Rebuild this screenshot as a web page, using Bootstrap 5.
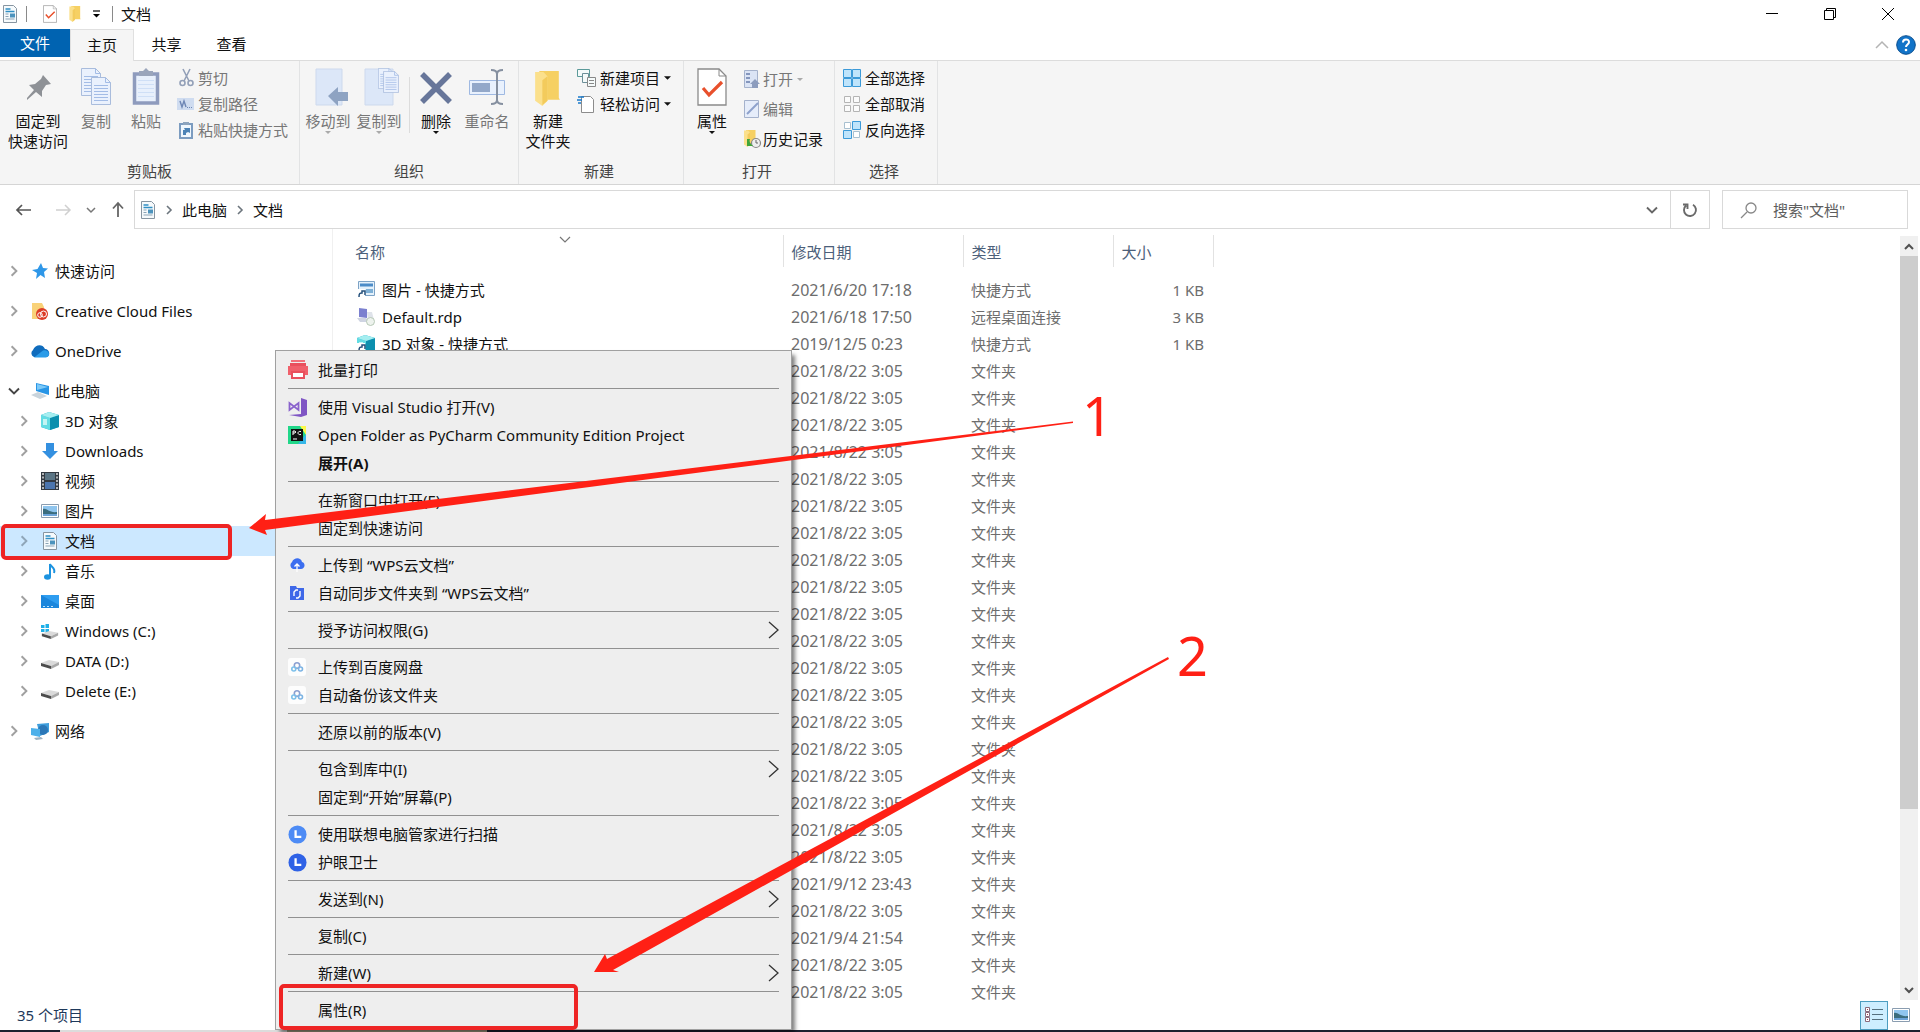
<!DOCTYPE html>
<html lang="zh-CN">
<head>
<meta charset="utf-8">
<meta name="viewport" content="width=device-width, initial-scale=1">
<title>文档</title>
<link rel="stylesheet" href="https://cdn.jsdelivr.net/npm/bootstrap@5.3.0/dist/css/bootstrap.min.css">
<style>
body{font-family:"Noto Sans","Noto Sans CJK SC",sans-serif;font-size:15px;line-height:20px;color:#111;background:#fff}
svg{flex:none;display:block;overflow:visible}
button,a{color:inherit;text-decoration:none}
.plain{border:0;background:none;padding:0;color:inherit}
.titlebar{height:29px;padding:0 3px 2px 2px}
.titlebar .vline{width:1px;height:16px;background:#8a8a8a}
.quick{gap:12px;margin:0 12px 0 16px}
.wctl{width:58px;height:24px}
.tabs{height:31px}
.tabs .filetab{width:70px;height:28px;background:#0063b1;color:#fff}
.tabs .rtab{width:65px;height:32px;padding-bottom:2px}
.tabs .rtab.on{background:#f5f5f5;border:1px solid #e0e0e0;border-bottom:0;position:relative;z-index:1;width:64px}
.ribbon{height:125px;background:#f5f5f5;border-top:1px solid #dcdcdc;border-bottom:1px solid #d5d5d5}
.rgroup{border-right:1px solid #e2e3e4;padding-bottom:3px}
.g1{width:300px}.g2{width:219px}.g3{width:165px}.g4{width:151px}.g5{width:103px}
.g1 .tools{padding-left:2px}.g2 .tools{padding-left:4px}.g3 .tools{padding-left:4px}.g5 .tools{padding-left:8px}
.rlabel{color:#444;text-align:center}
.g3 .rlabel,.g4 .rlabel,.g5 .rlabel{padding-right:4px}
.big{padding-top:7px;color:#111}
.big .lb{margin-top:5px}
.off{color:#777}
.off .tri{color:#aaa}
.smalls{padding-top:4px}
.small-btn{height:26px;gap:4px;white-space:nowrap}
.g4 .small-btn{height:30px}
.g4 .smalls{padding-top:3px}
.w44{width:44px}.w48{width:48px}.w50{width:50px}.w52{width:52px}.w54{width:54px}.w56{width:56px}.w72{width:72px}
.vsplit{width:1px;height:56px;margin:16px 0 0 3px;background:#dcdcdc}
.addr{height:44px;padding:5px 12px 0 0}
.navbtns{width:134px}
.crumbs{height:39px;border:1px solid #d9d9d9;padding-left:5px}
.crumbs .tail{height:37px;border-left:1px solid #d9d9d9;width:39px}
.search{width:186px;height:39px;border:1px solid #d9d9d9;margin-left:12px;padding-left:18px}
.search input{border:0;outline:0;padding:0;width:120px;background:none;color:#555}
.search input::placeholder{color:#5e5e5e;opacity:1}
.work{overflow:hidden}
.tree{width:333px;border-right:1px solid #f0f0f0;padding-top:27px}
.tree ul{list-style:none;margin:0 0 10px;padding:0}
.tree a{height:30px}
.tree .l1{padding-left:8px}.tree .l2{padding-left:18px}
.tree a > svg{width:12px;height:12px;color:#a0a0a0}
.tree .sel{background:#cce8ff}
.tree .sel > svg{color:#8fa5b8}
.tree .open > svg{color:#444;height:10px}
.tree .icn{width:24px;margin:0 3px 0 8px}
.files{table-layout:fixed;width:880px;margin-top:6px}
.files .c1{width:450px}.files .c2{width:180px}.files .c3{width:150px}.files .c4{width:100px}
.files th{height:32px;font-weight:400;color:#4c607a;border-right:1px solid #e2e2e2;padding:2px 8px 0;position:relative}
.files th:first-child{padding-left:22px}
.files tbody::before{content:"";display:block;height:9px}
.files td{height:27px;line-height:16px;padding:0 9px 0 8px;color:#6d6d6d;white-space:nowrap}
.files td:nth-child(2){font-size:16px}
.files td:first-child{padding-left:24px;color:#111}
.files td:last-child{text-align:right}
.sortmark{position:absolute;left:227px;top:2px}
.scroll{width:18px;margin:7px 2px 0 0;background:#f0f0f0}
.scroll button{height:20px;width:18px}
.scroll .thumb{height:553px;background:#cdcdcd}
.statusbar{height:30px;padding:0 10px 0 17px;color:#1e395b}
.statusbar .view-on{width:28px;height:29px;background:#cdeeff;border:1px solid #4d9dc0}
.taskedge{height:2px;background:#1b2030}
.taskedge i{height:2px}
.taskedge .e1{width:60px}.taskedge .e2{width:227px;background:#dcdcdc}.taskedge .e3{width:200px;background:#a39a80}
.ctx{position:absolute;left:275px;top:350px;width:517px;background:#eee;border:1px solid #a0a0a0;padding:6px 12px 4px;box-shadow:4px 4px 4px -1px rgba(0,0,0,.5)}
.ctx button{height:28px;width:100%;text-align:left;padding-bottom:2px}
.ctx .icn{width:18px;margin-right:12px}
.ctx hr{margin:3px 0 5px;border:0;height:1px;background:#919191;opacity:1}
.notes{position:absolute;left:0;top:0;pointer-events:none;z-index:5}
.notes text{font-family:"Noto Sans",sans-serif;font-size:54px;fill:#ff2015}
</style>
<script src="https://cdn.jsdelivr.net/npm/bootstrap@5.3.0/dist/js/bootstrap.bundle.min.js"></script>
</head>
<body>
<svg width="0" height="0" class="position-absolute" aria-hidden="true">
<defs>
<symbol id="doc" viewBox="0 0 16 18"><path d="M1.500 .5h10l3 3v14h-13z" fill="#f6fafc" stroke="#8795a1"/><path d="M3.500 4h5M3.500 6.500h9" stroke="#2f8fc4" stroke-width="1.500"/><path d="M3.500 9h3M3.500 11.500h3M3.500 14h9" stroke="#8ba3b5"/><path d="M8 8.500h5v4H8z" fill="#4c93bd"/></symbol>
<symbol id="chev" viewBox="0 0 10 10"><path d="M3 1l4 4-4 4" fill="none" stroke="currentColor" stroke-width="1.600"/></symbol>
<symbol id="chevd" viewBox="0 0 12 10"><path d="M1 2.500l5 5 5-5" fill="none" stroke="currentColor" stroke-width="1.900"/></symbol>
<symbol id="tri" viewBox="0 0 6 3"><path d="M0 0h6l-3 3z" fill="currentColor"/></symbol>
<symbol id="fold" viewBox="0 0 24 34"><path d="M4 0h19v26l1 2H7z" fill="#f6d063"/><path d="M0 1h8l4 4v24l-5 5-7-5z" fill="#fbe08c"/><path d="M12 5v24l-5 4V9z" fill="#f3cb5c"/></symbol>
<symbol id="check" viewBox="0 0 30 38"><path d="M1 1h21l7 7v29H1z" fill="#fff" stroke="#8a8a8a" stroke-width="1.300"/><path d="M22 1v7h7" fill="none" stroke="#8a8a8a"/><path d="M6 20l6 7L25 14" fill="none" stroke="#e8502c" stroke-width="3.200"/></symbol>
<symbol id="page" viewBox="0 0 20 28"><path d="M.5.5h14l5 5v22H.5z" fill="#eaf1fd" stroke="#a9bcdc"/><path d="M14.500 .5v5h5M3 8.500h14M3 11.500h14M3 14.500h14M3 17.500h14M3 20.500h14M3 23.500h14" fill="none" stroke="#a3bce6"/></symbol>
<symbol id="pic" viewBox="0 0 18 14"><path d="M.5.5h17v13H.5z" fill="#fff" stroke="#8a9db0"/><path d="M2 2h14v10H2z" fill="#8fc5ee"/><path d="M2 5c4-1 6 4 14 3v2H2z" fill="#3b6d7e"/><path d="M2 10h14v2H2z" fill="#6ba3d8"/></symbol>
<symbol id="cube" viewBox="0 0 18 18"><path d="M0 3l8-3 10 3v12l-9 3-9-3z" fill="#1ab0cc"/><path d="M0 3l9 3v12l-9-3z" fill="#62dce3"/><path d="M9 6l9-3v12l-9 3z" fill="#0c8fae"/><path d="M0 3l8-3 10 3-9 3z" fill="#a5eef0"/><path d="M2 7h4v6H2z" fill="#c3f4f3"/></symbol>
<symbol id="drive" viewBox="0 0 18 10"><path d="M0 4l8-3 10 2-8 4z" fill="#dadada"/><path d="M0 4l10 3v3L0 7z" fill="#4c4c4c"/><path d="M10 7l8-4v3l-8 4z" fill="#a9a9a9"/></symbol>
<symbol id="pan" viewBox="0 0 18 18"><rect width="18" height="18" rx="3" fill="#fdfdfd"/><g fill="none" stroke-width="1.600"><circle cx="9" cy="7.500" r="2.700" stroke="#8a9fd0"/><circle cx="5.800" cy="11" r="2" stroke="#7cc0ea"/><circle cx="12.500" cy="11" r="2" stroke="#7cb4e4"/></g></symbol>
<symbol id="lvo" viewBox="0 0 20 20"><circle cx="10" cy="10" r="9.500" fill="currentColor"/><path d="M8 5.500v7h6" fill="none" stroke="#fff" stroke-width="2.400"/></symbol>
</defs></svg>

<div class="d-flex flex-column vh-100 overflow-hidden position-relative">
<header>
<div class="titlebar d-flex align-items-center">
 <svg width="16" height="18"><use href="#doc"/></svg><span class="vline ms-2"></span>
 <div class="quick d-flex align-items-center">
 <button class="plain" aria-label="属性"><svg width="14" height="18"><use href="#check"/></svg></button>
 <button class="plain" aria-label="新建文件夹"><svg width="12" height="16"><use href="#fold"/></svg></button>
 <button class="plain" aria-label="自定义"><svg width="7" height="8" viewBox="0 0 7 8"><path d="M0 1h7" stroke="#111" stroke-width="1.300"/><path d="M0 4h7L3.500 7.500z"/></svg></button>
 </div>
 <span class="vline me-2"></span><span>文档</span>
 <div class="ms-auto d-flex">
  <button class="plain wctl d-flex justify-content-center align-items-center" aria-label="最小化"><svg width="12" height="12"><path d="M0 5.500h12" stroke="#000"/></svg></button>
  <button class="plain wctl d-flex justify-content-center align-items-center" aria-label="还原"><svg width="12" height="12" fill="none" stroke="#000"><path d="M.5 2.500h9v9h-9zM2.500 2V.5h9v9H10"/></svg></button>
  <button class="plain wctl d-flex justify-content-center align-items-center" aria-label="关闭"><svg width="12" height="12" stroke="#000"><path d="M0 0l12 12M12 0L0 12"/></svg></button>
 </div>
</div>
<nav class="tabs d-flex">
 <button class="plain filetab">文件</button>
 <button class="plain rtab on">主页</button><button class="plain rtab">共享</button><button class="plain rtab">查看</button>
 <div class="ms-auto d-flex align-items-center pe-1 gap-2">
  <svg width="12" height="8" fill="none" stroke="#b4b4b4" stroke-width="1.500"><path d="M0 7l6-6 6 6"/></svg>
  <button class="plain" aria-label="帮助"><svg width="20" height="20"><circle cx="10" cy="10" r="9.300" fill="#1173c8" stroke="#0b4f90"/><path d="M7 7.500c0-4 6-4 6-.5 0 2.500-3 2.500-3 5" fill="none" stroke="#fff" stroke-width="2"/><circle cx="10" cy="15" r="1.300" fill="#fff"/></svg></button>
 </div>
</nav>
<div class="ribbon d-flex">
 <section class="rgroup g1 d-flex flex-column">
  <div class="tools d-flex flex-fill align-items-start">
   <button class="plain big w72 d-flex flex-column align-items-center"><svg width="28" height="38" viewBox="0 0 28 38"><path d="M19 7l8 9-5 1-4 6v6l-6-5-9 8 0-2 7-8-5-5 6-1 6-5z" fill="#8e9196"/></svg><span class="lb">固定到<br>快速访问</span></button>
   <button class="plain big off w44 d-flex flex-column align-items-center"><svg width="30" height="38"><use href="#page" width="20" height="28"/><use href="#page" x="10" y="9" width="20" height="28"/></svg><span class="lb">复制</span></button>
   <button class="plain big off w56 d-flex flex-column align-items-center"><svg width="28" height="38"><path d="M2.500 6h23v29h-23z" fill="#e8f0fc" stroke="#8e9bbd" stroke-width="3.500"/><path d="M7 3h4l3-3 3 3h4v5H7z" fill="#9aa5bb"/><path d="M6 12.500h16M6 16.500h16M6 20.500h16M6 24.500h16M6 28.500h16" stroke="#cfdff6"/></svg><span class="lb">粘贴</span></button>
   <div class="smalls off ps-1">
    <button class="plain small-btn d-flex align-items-center"><svg width="16" height="18" fill="none" stroke="#93a0b8" stroke-width="1.600"><path d="M5 0l6 12M12 0L6 12"/><circle cx="4.500" cy="14" r="2.500"/><circle cx="12.500" cy="14" r="2.500"/></svg>剪切</button>
    <button class="plain small-btn d-flex align-items-center"><svg width="16" height="12"><path d="M-1 0h17v12H-1z" fill="#cfdcf0"/><path d="M2 3l2 6 2-6 2 6" fill="none" stroke="#6e87b5" stroke-width="1.400"/><path d="M9 9.500h6" stroke="#6e87b5" stroke-dasharray="1 1"/></svg>复制路径</button>
    <button class="plain small-btn d-flex align-items-center"><svg width="16" height="18"><path d="M2 3h12v14H2z" fill="#f0f7fd" stroke="#7c9cc0" stroke-width="2"/><path d="M5 1h6v3H5z" fill="#8da4bd"/><path d="M5 14V9h2L6 7h6v5l-2-1-2 1v2z" fill="#4d83b6"/></svg>粘贴快捷方式</button>
   </div>
  </div><div class="rlabel">剪贴板</div>
 </section>
 <section class="rgroup g2 d-flex flex-column">
  <div class="tools d-flex flex-fill align-items-start">
   <button class="plain big off w48 d-flex flex-column align-items-center"><svg width="24" height="38"><path d="M0 1h26v36H0z" fill="#dce7f8" stroke="#cdd9ed"/><path d="M12 28l10-9v5h10v9H22v5z" fill="#8ea3c2"/></svg><span class="lb">移动到</span><svg class="tri" width="6" height="3"><use href="#tri"/></svg></button>
   <button class="plain big off w54 d-flex flex-column align-items-center"><svg width="28" height="38"><path d="M0 1h28v36H0z" fill="#dce7f8" stroke="#cdd9ed"/><use href="#page" x="13" y="0" width="15" height="21"/><use href="#page" x="18" y="3" width="16" height="22"/></svg><span class="lb">复制到</span><svg class="tri" width="6" height="3"><use href="#tri"/></svg></button>
   <div class="vsplit"></div>
   <button class="plain big w52 d-flex flex-column align-items-center"><svg width="30" height="38"><path d="M1 6l28 28M29 6L1 34" stroke="#67769a" stroke-width="5.500"/></svg><span class="lb">删除</span><svg class="tri" width="6" height="3"><use href="#tri"/></svg></button>
   <button class="plain big off w50 d-flex flex-column align-items-center"><svg width="36" height="38"><path d="M.5 12.500h35v14H.5z" fill="#e9f1fd" stroke="#9fb9e2"/><path d="M3 15h18v9H3z" fill="#93a8c9"/><path d="M22 2q6 0 6 4v26q0 4-6 4M34 2q-6 0-6 4v26q0 4 6 4" fill="none" stroke="#8690a0" stroke-width="2"/></svg><span class="lb">重命名</span></button>
  </div><div class="rlabel">组织</div>
 </section>
 <section class="rgroup g3 d-flex flex-column">
  <div class="tools d-flex flex-fill align-items-start">
   <button class="plain big w50 d-flex flex-column align-items-center"><svg width="26" height="38"><use href="#fold" y="3" width="25" height="35"/></svg><span class="lb">新建<br>文件夹</span></button>
   <div class="smalls ps-1">
    <button class="plain small-btn d-flex align-items-center"><svg width="19" height="18" fill="#f5fafa"><path d="M.5.5h12v7H.5z" stroke="#5b9a99"/><path d="M5.500 4.500h6v9h-6z" stroke="#6c8f98"/><path d="M10.500 8.500h8v9h-8zM12 11.500h5M12 14.500h5" stroke="#888"/></svg>新建项目<svg width="7" height="4"><use href="#tri"/></svg></button>
    <button class="plain small-btn d-flex align-items-center"><svg width="19" height="18"><path d="M4.500 1.500h9l3 3v13h-12z" fill="#fff" stroke="#8c8c8c"/><path d="M1 2h6M0 5h5M1 8h3" stroke="#1979ca" stroke-width="1.400"/></svg>轻松访问<svg width="7" height="4"><use href="#tri"/></svg></button>
   </div>
  </div><div class="rlabel">新建</div>
 </section>
 <section class="rgroup g4 d-flex flex-column">
  <div class="tools d-flex flex-fill align-items-start">
   <button class="plain big w56 d-flex flex-column align-items-center"><svg width="30" height="38"><use href="#check"/></svg><span class="lb">属性</span><svg width="6" height="3"><use href="#tri"/></svg></button>
   <div class="smalls ps-1">
    <button class="plain small-btn off d-flex align-items-center"><svg width="15" height="18"><path d="M.5.5h13v17H.5z" fill="#dbe4f5" stroke="#a5b2cc"/><path d="M2 3h4v2H2zM2 7h4v2H2zM2 11h4v2H2z" fill="#8496bd"/><path d="M8 18v-4H6l5-5 5 5h-2v4z" fill="#8c9cbd"/></svg>打开<svg class="tri" width="6" height="3"><use href="#tri"/></svg></button>
    <button class="plain small-btn off d-flex align-items-center"><svg width="15" height="18"><path d="M.5.5h14v17H.5z" fill="#e6edfa" stroke="#a5b2cc"/><path d="M3 14L14 3" stroke="#8ea1cb" stroke-width="2"/></svg>编辑</button>
    <button class="plain small-btn d-flex align-items-center"><svg width="15" height="18"><use href="#fold" width="12" height="17"/><circle cx="12" cy="13" r="4.500" fill="#eee" stroke="#888" stroke-width="1.200"/><path d="M12 10v3h2" fill="none" stroke="#666"/><path d="M3 9v7h6l-2-2c-1-1-2-3-1-5z" fill="#3fa53b"/></svg>历史记录</button>
   </div>
  </div><div class="rlabel">打开</div>
 </section>
 <section class="rgroup g5 d-flex flex-column">
  <div class="tools smalls flex-fill">
    <button class="plain small-btn d-flex align-items-center"><svg width="18" height="18" fill="#bfe4fb" stroke="#3c9ad8"><path d="M.5.5h8v8h-8zM9.500 .5h8v8h-8zM.5 9.500h8v8h-8zM9.500 9.500h8v8h-8z"/></svg>全部选择</button>
    <button class="plain small-btn d-flex align-items-center"><svg width="18" height="16" fill="#fbfbfb" stroke="#b4b4b4"><path d="M1.500 .5h6v6h-6zM10.500 .5h6v6h-6zM1.500 9.500h6v6h-6zM10.500 9.500h6v6h-6z"/></svg>全部取消</button>
    <button class="plain small-btn d-flex align-items-center"><svg width="18" height="18"><path d="M1.500 1.500h6v6h-6zM10.500 10.500h6v6h-6z" fill="#fff" stroke="#a8c0d0"/><path d="M9.500 .5h8v8h-8zM.5 9.500h8v8h-8z" fill="#bfe4fb" stroke="#3c9ad8"/></svg>反向选择</button>
  </div><div class="rlabel">选择</div>
 </section>
</div>
<div class="addr d-flex">
 <div class="navbtns d-flex align-items-center ps-3">
  <button class="plain" aria-label="后退"><svg width="16" height="12" fill="none" stroke="#555" stroke-width="1.700"><path d="M15 6H1M6 1L1 6l5 5"/></svg></button>
  <button class="plain ms-4" aria-label="前进"><svg width="14" height="12" fill="none" stroke="#d0d0d0" stroke-width="1.500"><path d="M0 6h13M9 1l5 5-5 5"/></svg></button>
  <button class="plain ms-3" aria-label="最近"><svg width="10" height="8" style="color:#777"><use href="#chevd"/></svg></button>
  <button class="plain ms-3" aria-label="上移"><svg width="12" height="16" fill="none" stroke="#666" stroke-width="1.800"><path d="M6 15V1M1 6.500L6 1l5 5.500"/></svg></button>
 </div>
 <div class="crumbs d-flex align-items-center flex-fill">
  <svg width="16" height="18"><use href="#doc"/></svg>
  <svg class="ms-2 text-secondary" width="10" height="10"><use href="#chev"/></svg>
  <a href="#" class="ms-2">此电脑</a><svg class="ms-2 text-secondary" width="10" height="10"><use href="#chev"/></svg><a href="#" class="ms-2">文档</a>
  <button class="plain ms-auto me-2 pe-1" aria-label="展开地址"><svg width="12" height="10" style="color:#666"><use href="#chevd"/></svg></button>
  <button class="plain tail d-flex align-items-center justify-content-center" aria-label="刷新"><svg width="14" height="14" fill="none" stroke="#6a6a6a" stroke-width="1.900"><path d="M10 1.800A6 6 0 1 1 3 2.500M0 1.500h4.500V6"/></svg></button>
 </div>
 <div class="search d-flex align-items-center"><svg width="16" height="16" fill="none" stroke="#888" stroke-width="1.300"><circle cx="10" cy="6" r="5"/><path d="M6 10l-6 6"/></svg><input class="ms-3" type="text" aria-label="搜索" placeholder='搜索"文档"'></div>
</div>
</header>
<main class="work d-flex flex-fill">
<nav class="tree flex-shrink-0 text-nowrap">
 <ul><li><a href="#" class="l1 d-flex align-items-center"><svg><use href="#chev"/></svg><span class="icn d-flex justify-content-center"><svg width="16" height="16"><path d="M9 0l2 5 5 .5-4 3.500 1 6-4.500-3L4 16l1-6-5-3 5.500-1z" fill="#2e97e8"/></svg></span>快速访问</a></li></ul>
 <ul><li><a href="#" class="l1 d-flex align-items-center"><svg><use href="#chev"/></svg><span class="icn d-flex justify-content-center"><svg width="16" height="17"><path d="M0 0h10l2 4v12H0z" fill="#f9d279"/><circle cx="10" cy="11" r="6" fill="#dc3b26"/><circle cx="8" cy="12" r="2.300" fill="none" stroke="#fff"/><circle cx="11.500" cy="11" r="3" fill="none" stroke="#fff"/></svg></span>Creative Cloud Files</a></li></ul>
 <ul><li><a href="#" class="l1 d-flex align-items-center"><svg><use href="#chev"/></svg><span class="icn d-flex justify-content-center"><svg width="20" height="13"><path d="M4 12a4 4 0 0 1-1-7c2-5 9-7 12-1 5 0 6 8 1 8z" fill="#0f6cbd"/><path d="M4 12.500l9-7c5-2 9 5 3 7z" fill="#2a9be8"/></svg></span>OneDrive</a></li></ul>
 <ul><li><a href="#" class="l1 open d-flex align-items-center"><svg><use href="#chevd"/></svg><span class="icn d-flex justify-content-center"><svg width="18" height="16"><path d="M5 0l13 3v9L5 8z" fill="#2795e6"/><path d="M6 1l11 3-11 3z" fill="#7cc9f8"/><path d="M0 12l7-3 9 4-7 3z" fill="#c9d4dc"/></svg></span>此电脑</a></li>
 <li><a href="#" class="l2 d-flex align-items-center"><svg><use href="#chev"/></svg><span class="icn d-flex justify-content-center"><svg width="18" height="18"><use href="#cube"/></svg></span>3D 对象</a></li>
 <li><a href="#" class="l2 d-flex align-items-center"><svg><use href="#chev"/></svg><span class="icn d-flex justify-content-center"><svg width="16" height="16"><path d="M4 0h8v8h4l-8 8-8-8h4z" fill="#3490e0"/></svg></span>Downloads</a></li>
 <li><a href="#" class="l2 d-flex align-items-center"><svg><use href="#chev"/></svg><span class="icn d-flex justify-content-center"><svg width="18" height="18"><path d="M0 0h18v18H0z" fill="#333a42"/><path d="M4 1h10v7H4z" fill="#5b7585"/><path d="M4 10h10v7H4z" fill="#4b75ae"/><path d="M2 1v17M16 1v17" stroke="#e0e0e0" stroke-width="1.500" stroke-dasharray="2 1.500"/></svg></span>视频</a></li>
 <li><a href="#" class="l2 d-flex align-items-center"><svg><use href="#chev"/></svg><span class="icn d-flex justify-content-center"><svg width="18" height="14"><use href="#pic"/></svg></span>图片</a></li>
 <li><a href="#" class="l2 sel d-flex align-items-center"><svg><use href="#chev"/></svg><span class="icn d-flex justify-content-center"><svg width="16" height="18"><use href="#doc"/></svg></span>文档</a></li>
 <li><a href="#" class="l2 d-flex align-items-center"><svg><use href="#chev"/></svg><span class="icn d-flex justify-content-center"><svg width="12" height="17"><ellipse cx="3.500" cy="14" rx="3.500" ry="2.800" fill="#1c93e0"/><path d="M6 14V1c1 3 6 4 4 9" fill="none" stroke="#1c93e0" stroke-width="2"/></svg></span>音乐</a></li>
 <li><a href="#" class="l2 d-flex align-items-center"><svg><use href="#chev"/></svg><span class="icn d-flex justify-content-center"><svg width="18" height="13"><path d="M0 0h18v13H0z" fill="#1b86dc"/><path d="M0 0h18v10z" fill="#2e9df0"/><path d="M2 11.500h12" stroke="#bfe2fb" stroke-dasharray="2 2"/></svg></span>桌面</a></li>
 <li><a href="#" class="l2 d-flex align-items-center"><svg><use href="#chev"/></svg><span class="icn d-flex justify-content-center"><svg width="18" height="15"><path d="M0 1h3.500v3H0zM4.500 0H8v4H4.500zM0 5h3.500v3H0zM4.500 5H8v4H4.500z" fill="#1fb0e8"/><use href="#drive" y="6" width="18" height="9"/></svg></span>Windows (C:)</a></li>
 <li><a href="#" class="l2 d-flex align-items-center"><svg><use href="#chev"/></svg><span class="icn d-flex justify-content-center"><svg width="18" height="15"><use href="#drive" y="5" width="18" height="10"/></svg></span>DATA (D:)</a></li>
 <li><a href="#" class="l2 d-flex align-items-center"><svg><use href="#chev"/></svg><span class="icn d-flex justify-content-center"><svg width="18" height="15"><use href="#drive" y="5" width="18" height="10"/></svg></span>Delete (E:)</a></li></ul>
 <ul><li><a href="#" class="l1 d-flex align-items-center"><svg><use href="#chev"/></svg><span class="icn d-flex justify-content-center"><svg width="19" height="17"><path d="M6 1l12-1v9l-9 4z" fill="#3f9edc"/><circle cx="12" cy="7" r="5" fill="#2c78b8"/><path d="M0 5l9 1v8l-9-2z" fill="#4db0ea"/><path d="M3 15l7-1 2 2-7 1z" fill="#9db2c2"/></svg></span>网络</a></li></ul>
</nav>
<div class="flex-fill overflow-hidden">
<table class="files">
<colgroup><col class="c1"><col class="c2"><col class="c3"><col class="c4"></colgroup>
<thead><tr><th scope="col">名称<svg class="sortmark" width="10" height="6" fill="none" stroke="#777" stroke-width="1.200"><path d="M0 0l5 5 5-5"/></svg></th><th scope="col">修改日期</th><th scope="col">类型</th><th scope="col">大小</th></tr></thead>
<tbody>
<tr><td><div class="d-flex align-items-center gap-2"><svg width="17" height="17"><path d="M1.500 .5h16v14h-16z" fill="#e4f1fb" stroke="#7da3c6"/><path d="M3 4h13" stroke="#4c8cc8" stroke-width="3"/><path d="M9 8h7v4H9z" fill="#7eb0d6"/><path d="M0 8h8v9H0z" fill="#fff"/><path d="M2 16c0-4 1-4 3-4v-2h3v4" fill="none" stroke="#24507c" stroke-width="1.500"/></svg>图片 - 快捷方式</div></td><td>2021/6/20 17:18</td><td>快捷方式</td><td>1 KB</td></tr>
<tr><td><div class="d-flex align-items-center gap-2"><svg width="17" height="18"><path d="M2 0l8 1v9l-8-1z" fill="#7b80cf"/><path d="M0 10h9l4 4H3z" fill="#cfd4e2"/><path d="M10 4h5l2 8h-6z" fill="#dfe3ea"/><circle cx="13.500" cy="13.500" r="4" fill="#eef3ee" stroke="#b6c8b6"/></svg>Default.rdp</div></td><td>2021/6/18 17:50</td><td>远程桌面连接</td><td>3 KB</td></tr>
<tr><td><div class="d-flex align-items-center gap-2"><svg width="17" height="18"><use href="#cube" width="18" height="18"/><path d="M0 8h8v10H0z" fill="#fff"/><path d="M2 16c0-4 1-4 3-4v-2h3v4" fill="none" stroke="#24507c" stroke-width="1.500"/></svg>3D 对象 - 快捷方式</div></td><td>2019/12/5 0:23</td><td>快捷方式</td><td>1 KB</td></tr>
<tr><td></td><td>2021/8/22 3:05</td><td>文件夹</td><td></td></tr>
<tr><td></td><td>2021/8/22 3:05</td><td>文件夹</td><td></td></tr>
<tr><td></td><td>2021/8/22 3:05</td><td>文件夹</td><td></td></tr>
<tr><td></td><td>2021/8/22 3:05</td><td>文件夹</td><td></td></tr>
<tr><td></td><td>2021/8/22 3:05</td><td>文件夹</td><td></td></tr>
<tr><td></td><td>2021/8/22 3:05</td><td>文件夹</td><td></td></tr>
<tr><td></td><td>2021/8/22 3:05</td><td>文件夹</td><td></td></tr>
<tr><td></td><td>2021/8/22 3:05</td><td>文件夹</td><td></td></tr>
<tr><td></td><td>2021/8/22 3:05</td><td>文件夹</td><td></td></tr>
<tr><td></td><td>2021/8/22 3:05</td><td>文件夹</td><td></td></tr>
<tr><td></td><td>2021/8/22 3:05</td><td>文件夹</td><td></td></tr>
<tr><td></td><td>2021/8/22 3:05</td><td>文件夹</td><td></td></tr>
<tr><td></td><td>2021/8/22 3:05</td><td>文件夹</td><td></td></tr>
<tr><td></td><td>2021/8/22 3:05</td><td>文件夹</td><td></td></tr>
<tr><td></td><td>2021/8/22 3:05</td><td>文件夹</td><td></td></tr>
<tr><td></td><td>2021/8/22 3:05</td><td>文件夹</td><td></td></tr>
<tr><td></td><td>2021/8/22 3:05</td><td>文件夹</td><td></td></tr>
<tr><td></td><td>2021/8/22 3:05</td><td>文件夹</td><td></td></tr>
<tr><td></td><td>2021/8/22 3:05</td><td>文件夹</td><td></td></tr>
<tr><td></td><td>2021/9/12 23:43</td><td>文件夹</td><td></td></tr>
<tr><td></td><td>2021/8/22 3:05</td><td>文件夹</td><td></td></tr>
<tr><td></td><td>2021/9/4 21:54</td><td>文件夹</td><td></td></tr>
<tr><td></td><td>2021/8/22 3:05</td><td>文件夹</td><td></td></tr>
<tr><td></td><td>2021/8/22 3:05</td><td>文件夹</td><td></td></tr>
</tbody></table>
</div>
<div class="scroll d-flex flex-column flex-shrink-0">
 <button class="plain d-flex align-items-center justify-content-center" aria-label="向上滚动"><svg width="10" height="7" fill="none" stroke="#505050" stroke-width="2"><path d="M1 6l4-4 4 4"/></svg></button>
 <div class="thumb"></div>
 <button class="plain mt-auto d-flex align-items-center justify-content-center" aria-label="向下滚动"><svg width="10" height="7" fill="none" stroke="#505050" stroke-width="2"><path d="M1 1l4 4 4-4"/></svg></button>
</div>
</main>
<footer class="flex-shrink-0">
 <div class="statusbar d-flex align-items-center"><span>35 个项目</span>
  <button class="plain view-on ms-auto d-flex align-items-center justify-content-center" aria-label="详细信息"><svg width="18" height="16"><path d="M.5.500h4v4h-4zM.5 5.500h4v4h-4zM.5 10.500h4v4h-4z" fill="#fff" stroke="#8a6a7c"/><path d="M7 2.500h11M7 7.500h11M7 12.500h11" stroke="#55707e"/><path d="M2 2.500h1M2 7.500h1M2 12.500h1" stroke="#b23a4a"/></svg></button>
  <button class="plain ms-1" aria-label="大图标"><svg width="18" height="14"><use href="#pic"/></svg></button>
 </div>
 <div class="taskedge d-flex"><i class="e1"></i><i class="e2"></i><i class="e3"></i></div>
</footer>

<div class="ctx" role="menu">
 <button class="plain d-flex align-items-center" role="menuitem"><span class="icn"><svg width="20" height="20"><path d="M3 0h14v2H3z" fill="#f2707a"/><path d="M2 3h16v4H2z" fill="#e9505d"/><path d="M0 6h20v9H0z" fill="#f0606b"/><path d="M3 11h14v8H3z" fill="#e9505d"/><path d="M5 13h10v4H5z" fill="#fff"/></svg></span>批量打印</button>
 <hr>
 <button class="plain d-flex align-items-center" role="menuitem"><span class="icn"><svg width="19" height="19"><path d="M13 0l6 2v15l-6 2-12-2 12-1z" fill="#7f55c4"/><path d="M1.500 5v7l9-7v7z" fill="none" stroke="#8a63cc" stroke-width="1.800"/></svg></span>使用 Visual Studio 打开(V)</button>
 <button class="plain d-flex align-items-center" role="menuitem"><span class="icn"><svg width="18" height="18"><path d="M0 0h18v18H0z" fill="#21d789"/><path d="M12 0h6v9z" fill="#fcf84a"/><path d="M18 8v10h-8z" fill="#35b7e8"/><path d="M3 3h12v12H3z" fill="#111"/><path d="M5 9V5h2q1.500 1 0 2H5M13 5.500c-4-1-4 4 0 3M5 13h4" fill="none" stroke="#fff"/></svg></span>Open Folder as PyCharm Community Edition Project</button>
 <button class="plain d-flex align-items-center fw-bold" role="menuitem"><span class="icn"></span>展开(A)</button>
 <hr>
 <button class="plain d-flex align-items-center" role="menuitem"><span class="icn"></span>在新窗口中打开(E)</button>
 <button class="plain d-flex align-items-center" role="menuitem"><span class="icn"></span>固定到快速访问</button>
 <hr>
 <button class="plain d-flex align-items-center" role="menuitem"><span class="icn"><svg width="18" height="14"><path d="M5 11a4 4 0 0 1-1-7c2-5 9-5 10 0 4 1 3 7-1 7z" fill="#3b6ef0"/><path d="M9 14V6M6.500 8.500L9 6l2.500 2.500" fill="none" stroke="#fff" stroke-width="1.300"/></svg></span>上传到 “WPS云文档”</button>
 <button class="plain d-flex align-items-center" role="menuitem"><span class="icn"><svg width="18" height="14"><path d="M2 0h6l1 2h7v12H2z" fill="#3f68e8"/><path d="M6 10V6l2-2h2M12 5v5l-2 2H8" fill="none" stroke="#fff" stroke-width="1.400"/></svg></span>自动同步文件夹到 “WPS云文档”</button>
 <hr>
 <button class="plain d-flex align-items-center" role="menuitem"><span class="icn"></span>授予访问权限(G)<svg class="ms-auto" width="11" height="18" fill="none" stroke="#333" stroke-width="1.300"><path d="M1 1l9 8-9 8"/></svg></button>
 <hr>
 <button class="plain d-flex align-items-center" role="menuitem"><span class="icn"><svg width="18" height="18"><use href="#pan"/></svg></span>上传到百度网盘</button>
 <button class="plain d-flex align-items-center" role="menuitem"><span class="icn"><svg width="18" height="18"><use href="#pan"/></svg></span>自动备份该文件夹</button>
 <hr>
 <button class="plain d-flex align-items-center" role="menuitem"><span class="icn"></span>还原以前的版本(V)</button>
 <hr>
 <button class="plain d-flex align-items-center" role="menuitem"><span class="icn"></span>包含到库中(I)<svg class="ms-auto" width="11" height="18" fill="none" stroke="#333" stroke-width="1.300"><path d="M1 1l9 8-9 8"/></svg></button>
 <button class="plain d-flex align-items-center" role="menuitem"><span class="icn"></span>固定到“开始”屏幕(P)</button>
 <hr>
 <button class="plain d-flex align-items-center" role="menuitem"><span class="icn"><svg width="19" height="19" style="color:#4d8bf5"><use href="#lvo"/></svg></span>使用联想电脑管家进行扫描</button>
 <button class="plain d-flex align-items-center" role="menuitem"><span class="icn"><svg width="19" height="19" style="color:#2f62e6"><use href="#lvo"/></svg></span>护眼卫士</button>
 <hr>
 <button class="plain d-flex align-items-center" role="menuitem"><span class="icn"></span>发送到(N)<svg class="ms-auto" width="11" height="18" fill="none" stroke="#333" stroke-width="1.300"><path d="M1 1l9 8-9 8"/></svg></button>
 <hr>
 <button class="plain d-flex align-items-center" role="menuitem"><span class="icn"></span>复制(C)</button>
 <hr>
 <button class="plain d-flex align-items-center" role="menuitem"><span class="icn"></span>新建(W)<svg class="ms-auto" width="11" height="18" fill="none" stroke="#333" stroke-width="1.300"><path d="M1 1l9 8-9 8"/></svg></button>
 <hr>
 <button class="plain d-flex align-items-center" role="menuitem"><span class="icn"></span>属性(R)</button>
</div>

<svg class="notes" width="1240" height="1032">
 <g fill="none" stroke="#ee2424" stroke-width="4"><rect x="3" y="526" width="227" height="32" rx="3"/><rect x="281" y="986" width="295" height="42" rx="3"/></g>
 <g fill="#ff2015"><path d="M249 528l17-14-1 6 808-98.500v1.500L265 530l2 5z"/><path d="M594 972l11-18 2 5 561-302 1 2-556 311 6 2z"/></g>
 <text x="1082" y="436">1</text><text x="1177" y="676">2</text>
</svg>
</div>
</body>
</html>
